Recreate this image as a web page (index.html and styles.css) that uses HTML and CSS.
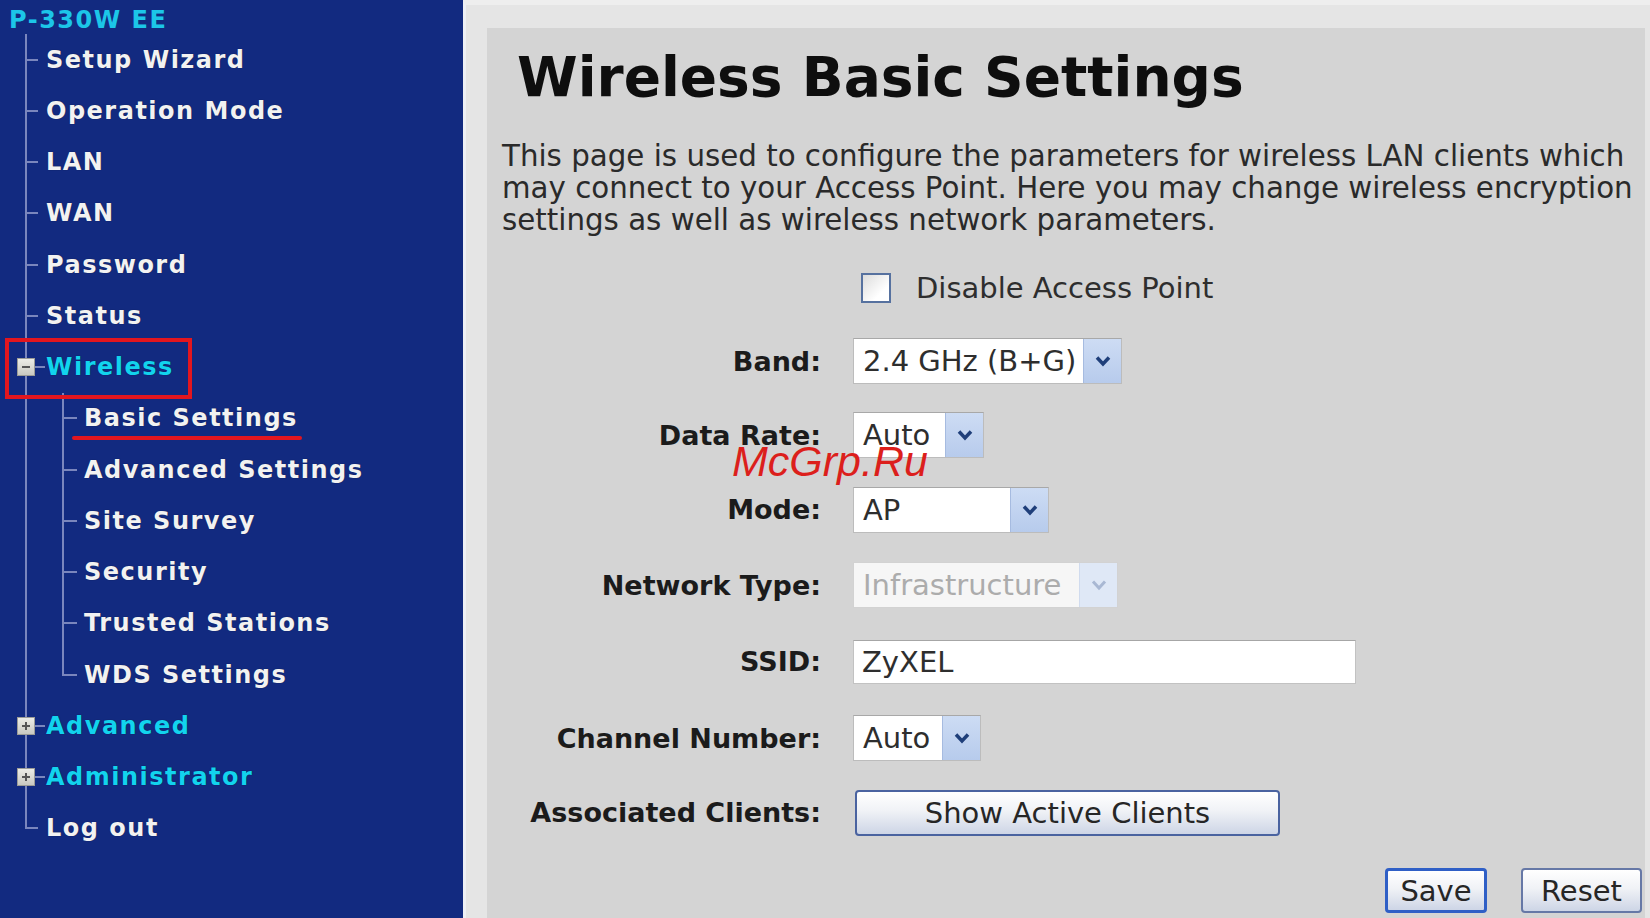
FILE: index.html
```html
<!DOCTYPE html>
<html lang="en">
<head>
<meta charset="utf-8">
<title>Wireless Basic Settings</title>
<link rel="stylesheet" href="styles.css">
</head>
<body>
<div class="app">
  <nav class="sidebar">
    <div class="brand">P-330W EE</div>
    <ul class="tree">
      <li><a class="item">Setup Wizard</a></li>
      <li><a class="item">Operation Mode</a></li>
      <li><a class="item">LAN</a></li>
      <li><a class="item">WAN</a></li>
      <li><a class="item">Password</a></li>
      <li><a class="item">Status</a></li>
      <li>
        <a class="item folder marked"><span class="box minus"></span>Wireless</a>
        <ul class="subtree">
          <li><a class="item current">Basic Settings</a></li>
          <li><a class="item">Advanced Settings</a></li>
          <li><a class="item">Site Survey</a></li>
          <li><a class="item">Security</a></li>
          <li><a class="item">Trusted Stations</a></li>
          <li><a class="item">WDS Settings</a></li>
        </ul>
      </li>
      <li><a class="item folder"><span class="box plus"></span>Advanced</a></li>
      <li><a class="item folder"><span class="box plus"></span>Administrator</a></li>
      <li><a class="item">Log out</a></li>
    </ul>
  </nav>
  <main class="main">
    <section class="panel">
      <h1 class="title">Wireless Basic Settings</h1>
      <p class="intro">This page is used to configure the parameters for wireless LAN clients which<br>may connect to your Access Point. Here you may change wireless encryption<br>settings as well as wireless network parameters.</p>
      <form class="form">
        <div class="label"></div>
        <label class="control check"><span class="checkbox"></span>Disable Access Point</label>

        <div class="label">Band:</div>
        <div class="control"><span class="select w-band"><span class="value">2.4 GHz (B+G)</span><span class="arrow"><svg width="18" height="12" viewBox="0 0 18 12"><polyline points="3,2.5 9,9 15,2.5" fill="none" stroke="#1f3f7a" stroke-width="3.5"/></svg></span></span></div>

        <div class="label">Data Rate:</div>
        <div class="control"><span class="select w-rate"><span class="value">Auto</span><span class="arrow"><svg width="18" height="12" viewBox="0 0 18 12"><polyline points="3,2.5 9,9 15,2.5" fill="none" stroke="#1f3f7a" stroke-width="3.5"/></svg></span></span></div>

        <div class="label">Mode:</div>
        <div class="control"><span class="select w-mode"><span class="value">AP</span><span class="arrow"><svg width="18" height="12" viewBox="0 0 18 12"><polyline points="3,2.5 9,9 15,2.5" fill="none" stroke="#1f3f7a" stroke-width="3.5"/></svg></span></span></div>

        <div class="label">Network Type:</div>
        <div class="control"><span class="select w-type disabled"><span class="value">Infrastructure</span><span class="arrow"><svg width="18" height="12" viewBox="0 0 18 12"><polyline points="3,2.5 9,9 15,2.5" fill="none" stroke="#a9b8d3" stroke-width="3"/></svg></span></span></div>

        <div class="label">SSID:</div>
        <div class="control"><span class="input w-ssid">ZyXEL</span></div>

        <div class="label">Channel Number:</div>
        <div class="control"><span class="select w-chan"><span class="value">Auto</span><span class="arrow"><svg width="18" height="12" viewBox="0 0 18 12"><polyline points="3,2.5 9,9 15,2.5" fill="none" stroke="#1f3f7a" stroke-width="3.5"/></svg></span></span></div>

        <div class="label">Associated Clients:</div>
        <div class="control"><button type="button" class="btn btn-wide">Show Active Clients</button></div>
      </form>
      <div class="actions">
        <button type="button" class="btn btn-save">Save</button>
        <button type="button" class="btn btn-reset">Reset</button>
      </div>
      <div class="watermark">McGrp.Ru</div>
    </section>
  </main>
</div>
</body>
</html>
```
FILE: styles.css
```css
html, body {
  margin: 0;
  padding: 0;
}

body {
  width: 1650px;
  height: 918px;
  overflow: hidden;
  font-family: "DejaVu Sans", Verdana, sans-serif;
}

.app {
  display: flex;
  height: 918px;
}

/* ---------- Sidebar ---------- */
.sidebar {
  width: 463px;
  flex: none;
  background: #122a80;
  color: #f2f2f2;
  font-weight: bold;
  font-size: 24px;
  letter-spacing: 1.5px;
}

.brand {
  padding: 7px 0 0 9px;
  line-height: 27px;
  color: #1cc6e8;
  white-space: nowrap;
}

.tree,
.subtree {
  list-style: none;
  margin: 0;
  padding: 0;
}

.tree > li {
  background: linear-gradient(#7a86bd, #7a86bd) 25px 0 / 2px 100% no-repeat;
}

.tree > li:last-child {
  background-size: 2px 25.6px;
}

.item {
  position: relative;
  display: flex;
  align-items: center;
  height: 51.25px;
  padding-left: 46px;
  box-sizing: border-box;
  white-space: nowrap;
  text-shadow: 0 0 1px rgba(0, 0, 0, 0.6);
  background: linear-gradient(#7a86bd, #7a86bd) 25px center / 13px 2px no-repeat;
}

.item.folder {
  padding-left: 17px;
  color: #12d3ee;
  background-position: 35px center;
  background-size: 10px 2px;
}

.box {
  width: 18px;
  height: 18px;
  margin-right: 11px;
  box-sizing: border-box;
  border: 1px solid #9c9c96;
  flex: none;
}

.box.minus {
  background:
    linear-gradient(#555, #555) center / 8px 2px no-repeat,
    linear-gradient(#ecece6, #c9c9c2);
}

.box.plus {
  background:
    linear-gradient(#555, #555) center / 8px 2px no-repeat,
    linear-gradient(#555, #555) center / 2px 8px no-repeat,
    linear-gradient(#ecece6, #c9c9c2);
}

.item.marked::after {
  content: "";
  position: absolute;
  left: 5px;
  top: -4px;
  width: 187px;
  height: 61px;
  box-sizing: border-box;
  border: 4px solid #e3161f;
}

.subtree > li {
  background: linear-gradient(#7a86bd, #7a86bd) 62px 0 / 2px 100% no-repeat;
}

.subtree > li:last-child {
  background-size: 2px 25.6px;
}

.subtree .item {
  padding-left: 84px;
  background-position: 62px center;
  background-size: 15px 2px;
}

.item.current::after {
  content: "";
  position: absolute;
  left: 72px;
  top: 43px;
  width: 230px;
  height: 4px;
  border-radius: 2px;
  background: #e3161f;
}

/* ---------- Main ---------- */
.main {
  flex: 1;
  display: flex;
  background: #e5e5e5;
  border-left: 3px solid #eef0f5;
  border-top: 5px solid #eeeeee;
  padding: 23px 5px 0 21px;
}

.panel {
  position: relative;
  flex: 1;
  background: #d4d4d4;
  padding: 19px 0 0 15px;
  color: #1b1b1b;
}

.title {
  margin: 0;
  padding-left: 15px;
  font-size: 55px;
  line-height: 60px;
  font-weight: bold;
  color: #0e0e0e;
}

.intro {
  margin: 34px 0 0 0;
  font-size: 29.3px;
  line-height: 31.8px;
  color: #2a2a2a;
  white-space: nowrap;
}

.form {
  display: grid;
  grid-template-columns: 319px auto;
  grid-template-rows: 73px 73.5px 74.5px 75px 76px 77px 75.5px 74px;
  column-gap: 32px;
  align-items: center;
  margin-top: 15px;
}

.label {
  text-align: right;
  font-weight: bold;
  font-size: 27px;
  color: #1b1b1b;
  white-space: nowrap;
}

.control {
  display: flex;
  align-items: center;
  font-size: 29px;
  color: #2e2e2e;
}

.check {
  padding-left: 8px;
}

.checkbox {
  width: 30px;
  height: 30px;
  box-sizing: border-box;
  border: 2px solid #56719f;
  background: linear-gradient(135deg, #dcdcdc, #ffffff 70%);
  margin-right: 25px;
}

.select {
  display: inline-flex;
  height: 46px;
  box-sizing: border-box;
  border: 1px solid #bcbcbc;
  border-top-color: #a8a8a8;
  background: #ffffff;
}

.select .value {
  flex: 1;
  padding-left: 9px;
  line-height: 44px;
  white-space: nowrap;
  overflow: hidden;
}

.select .arrow {
  width: 37px;
  flex: none;
  display: flex;
  align-items: center;
  justify-content: center;
  background: linear-gradient(#cddcf4, #b7cbec);
  border-left: 1px solid #a6bbe0;
}

.select.disabled {
  border-color: #d2d2d2;
  background: #f6f6f6;
}

.select.disabled .value {
  color: #acacac;
}

.select.disabled .arrow {
  background: #dfe8f6;
  border-left-color: #d0dbee;
}

.w-band { width: 269px; }
.w-rate { width: 131px; }
.w-mode { width: 196px; }
.w-type { width: 265px; }
.w-chan { width: 128px; }

.input {
  display: flex;
  align-items: center;
  width: 503px;
  height: 44px;
  box-sizing: border-box;
  padding-left: 8px;
  background: #ffffff;
  border: 1px solid #c2c2c2;
  border-top-color: #a6a6a6;
}

.btn {
  font-family: "DejaVu Sans", Verdana, sans-serif;
  font-size: 29px;
  color: #262626;
  height: 46px;
  box-sizing: border-box;
  padding: 0;
  border: 2px solid #4a63a0;
  border-radius: 4px;
  background: linear-gradient(#ffffff, #f0f2f6 45%, #cdd5e6);
}

.btn-wide {
  width: 425px;
  margin-left: 2px;
}

.actions {
  display: flex;
  justify-content: flex-end;
  gap: 34px;
  margin-top: 18.5px;
  padding-right: 3px;
}

.btn-save {
  width: 102px;
  height: 45px;
  border: 3px solid #2f5fc6;
}

.btn-reset {
  width: 121px;
  height: 45px;
  border: 2px solid #6678a6;
}

.watermark {
  position: absolute;
  left: 245px;
  top: 412px;
  font-family: "Liberation Sans", Arial, sans-serif;
  font-style: italic;
  font-size: 43px;
  line-height: 43px;
  color: #dc1f1c;
  white-space: nowrap;
}
```
